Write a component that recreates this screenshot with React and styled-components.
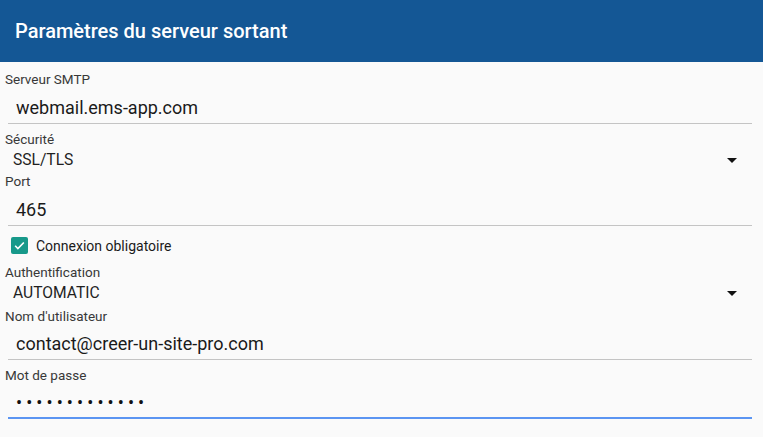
import React from 'react';
import styled, { createGlobalStyle } from 'styled-components';

const GlobalStyle = createGlobalStyle`
  html, body {
    margin: 0;
    padding: 0;
    background: #fafafa;
  }
  body {
    font-family: Roboto, "Noto Sans", sans-serif;
    width: 763px;
    height: 437px;
    overflow: hidden;
  }
`;

const Screen = styled.div`
  width: 763px;
  height: 437px;
  background: #fafafa;
  display: flex;
  flex-direction: column;
`;

const Header = styled.header`
  height: 62px;
  flex-shrink: 0;
  background: #145795;
  display: flex;
  align-items: center;
  padding-left: 15px;
  h1 {
    margin: 0;
    color: #fff;
    font-size: 20px;
    font-weight: 500;
  }
`;

const Form = styled.div`
  display: flex;
  flex-direction: column;
  padding: 7px 11px 0 5px;
`;

const Label = styled.div`
  font-size: 13.5px;
  line-height: 20px;
  height: 20px;
  color: #383838;
  margin-top: ${p => p.$gap || 0}px;
`;

const TextInput = styled.div`
  margin-left: 3px;
  padding: ${p => p.$pt || 9}px 0 ${p => (p.$focused ? 4 : 5)}px 8px;
  border-bottom: ${p => (p.$focused ? '2px solid #5b95f2' : '1px solid #c4c4c4')};
  font-size: 18px;
  line-height: 20px;
  height: 20px;
  color: #1a1a1a;
`;

const Dots = styled.span`
  font-size: 18px;
  letter-spacing: 4.1px;
  color: #111;
`;

const Select = styled.div`
  display: flex;
  align-items: center;
  justify-content: space-between;
  height: 22px;
  padding: 0 15px 0 8px;
  font-size: 15.6px;
  color: #1f1f1f;
`;

const Caret = styled.span`
  width: 0;
  height: 0;
  border-left: 5px solid transparent;
  border-right: 5px solid transparent;
  border-top: 5px solid #111;
`;

const CheckRow = styled.label`
  display: flex;
  align-items: center;
  height: 33px;
  margin-top: 3px;
  padding-left: 6px;
  gap: 8px;
  font-size: 14px;
  color: #1a1a1a;
`;

const Box = styled.span`
  width: 17px;
  height: 17px;
  border-radius: 2px;
  background: #17998a;
  display: flex;
  align-items: center;
  justify-content: center;
`;

function Checkbox() {
  return (
    <Box>
      <svg width="13" height="13" viewBox="0 0 24 24">
        <path d="M4 12.5l5 5L20 6.5" fill="none" stroke="#fff" strokeWidth="3" />
      </svg>
    </Box>
  );
}

export default function App() {
  return (
    <>
      <GlobalStyle />
      <Screen>
        <Header>
          <h1>Paramètres du serveur sortant</h1>
        </Header>
        <Form>
          <Label>Serveur SMTP</Label>
          <TextInput>webmail.ems-app.com</TextInput>

          <Label $gap={5}>Sécurité</Label>
          <Select>
            <span>SSL/TLS</span>
            <Caret />
          </Select>

          <Label>Port</Label>
          <TextInput>465</TextInput>

          <CheckRow>
            <Checkbox />
            Connexion obligatoire
          </CheckRow>

          <Label>Authentification</Label>
          <Select>
            <span>AUTOMATIC</span>
            <Caret />
          </Select>

          <Label $gap={2}>Nom d'utilisateur</Label>
          <TextInput $pt={8}>contact@creer-un-site-pro.com</TextInput>

          <Label $gap={5}>Mot de passe</Label>
          <TextInput $pt={8} $focused>
            <Dots>•••••••••••••</Dots>
          </TextInput>
        </Form>
      </Screen>
    </>
  );
}
